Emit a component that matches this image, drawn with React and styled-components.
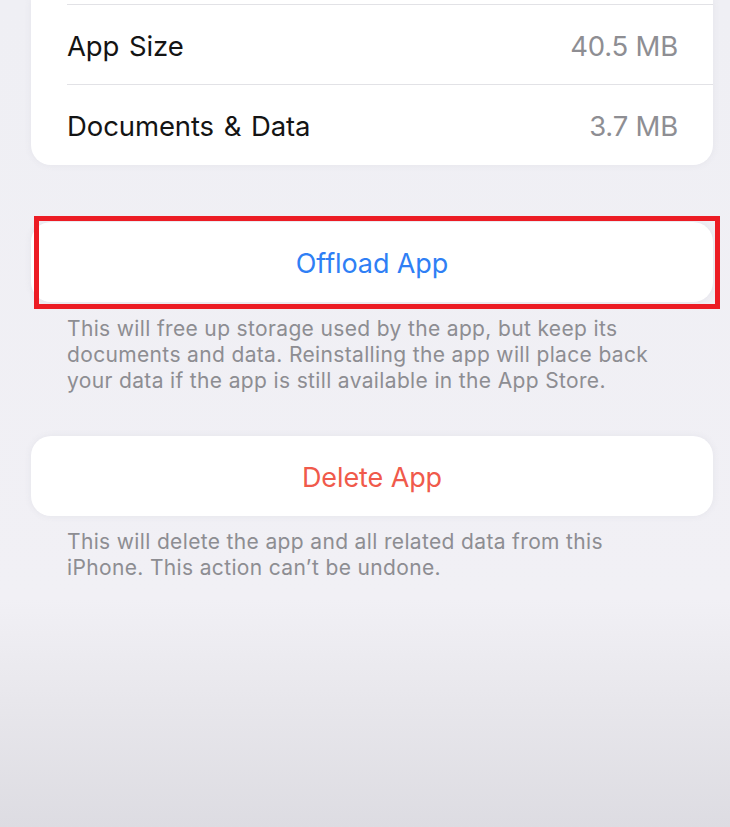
import React from "react";
import styled, { createGlobalStyle } from "styled-components";

const Global = createGlobalStyle`
  html, body {
    margin: 0;
    padding: 0;
  }
  body {
    width: 730px;
    height: 827px;
    overflow: hidden;
    background: linear-gradient(180deg, #efeff4 0px, #f1f0f5 600px, #e8e7ec 700px, #dddce2 827px);
    font-family: "Inter", "Noto Sans", sans-serif;
    -webkit-font-smoothing: antialiased;
  }
`;

const Page = styled.div`
  display: flex;
  flex-direction: column;
  padding: 0 17px 0 31px;
`;

const Card = styled.div`
  background: #ffffff;
  border-radius: ${(p) => (p.$openTop ? "0 0 20px 20px" : "20px")};
  box-shadow: 0 0 6px rgba(220, 220, 228, 0.6);
`;

const TopSpacer = styled.div`
  height: 4px;
`;

const Separator = styled.div`
  height: 1px;
  margin-left: 36px;
  background: #e2e2e6;
`;

const Row = styled.div`
  height: ${(p) => p.$h || 80}px;
  display: flex;
  align-items: center;
  justify-content: space-between;
  padding: 2px 35px 0 36px;
  box-sizing: border-box;
`;

const Label = styled.span`
  font-size: 27.5px;
  color: #141414;
  letter-spacing: -0.1px;
  word-spacing: 2px;
`;

const Value = styled.span`
  font-size: 27.5px;
  color: #8e8e93;
  letter-spacing: -0.2px;
`;

const ActionWrap = styled.div`
  position: relative;
  margin-top: ${(p) => p.$mt}px;
`;

const ActionCard = styled.div`
  height: 80px;
  background: #ffffff;
  border-radius: 20px;
  display: flex;
  align-items: center;
  justify-content: center;
  box-shadow: 0 0 6px rgba(220, 220, 228, 0.6);
`;

const ActionText = styled.span`
  font-size: 27px;
  color: ${(p) => p.$color};
  letter-spacing: -0.1px;
  padding-top: 2px;
`;

const Highlight = styled.div`
  position: absolute;
  left: 3px;
  top: -6px;
  right: -7px;
  bottom: -7px;
  border: 5px solid #ec1c24;
  pointer-events: none;
`;

const Footnote = styled.p`
  margin: ${(p) => p.$mt}px 0 0 36px;
  font-size: 21px;
  line-height: 26px;
  color: #8d8d92;
  letter-spacing: 0.35px;
  max-width: 606px;
`;

export default function App() {
  return (
    <>
      <Global />
      <Page>
        <Card $openTop>
          <TopSpacer />
          <Separator />
          <Row $h={79}>
            <Label>App Size</Label>
            <Value>40.5 MB</Value>
          </Row>
          <Separator />
          <Row $h={80}>
            <Label>Documents &amp; Data</Label>
            <Value>3.7 MB</Value>
          </Row>
        </Card>

        <ActionWrap $mt={57}>
          <ActionCard>
            <ActionText $color="#2f7ff5">Offload App</ActionText>
          </ActionCard>
          <Highlight />
        </ActionWrap>
        <Footnote $mt={14}>
          This will free up storage used by the app, but keep its documents and
          data. Reinstalling the app will place back your data if the app is
          still available in the App Store.
        </Footnote>

        <ActionWrap $mt={42}>
          <ActionCard>
            <ActionText $color="#f05a4b">Delete App</ActionText>
          </ActionCard>
        </ActionWrap>
        <Footnote $mt={13}>
          This will delete the app and all related data from this iPhone. This
          action can’t be undone.
        </Footnote>
      </Page>
    </>
  );
}
